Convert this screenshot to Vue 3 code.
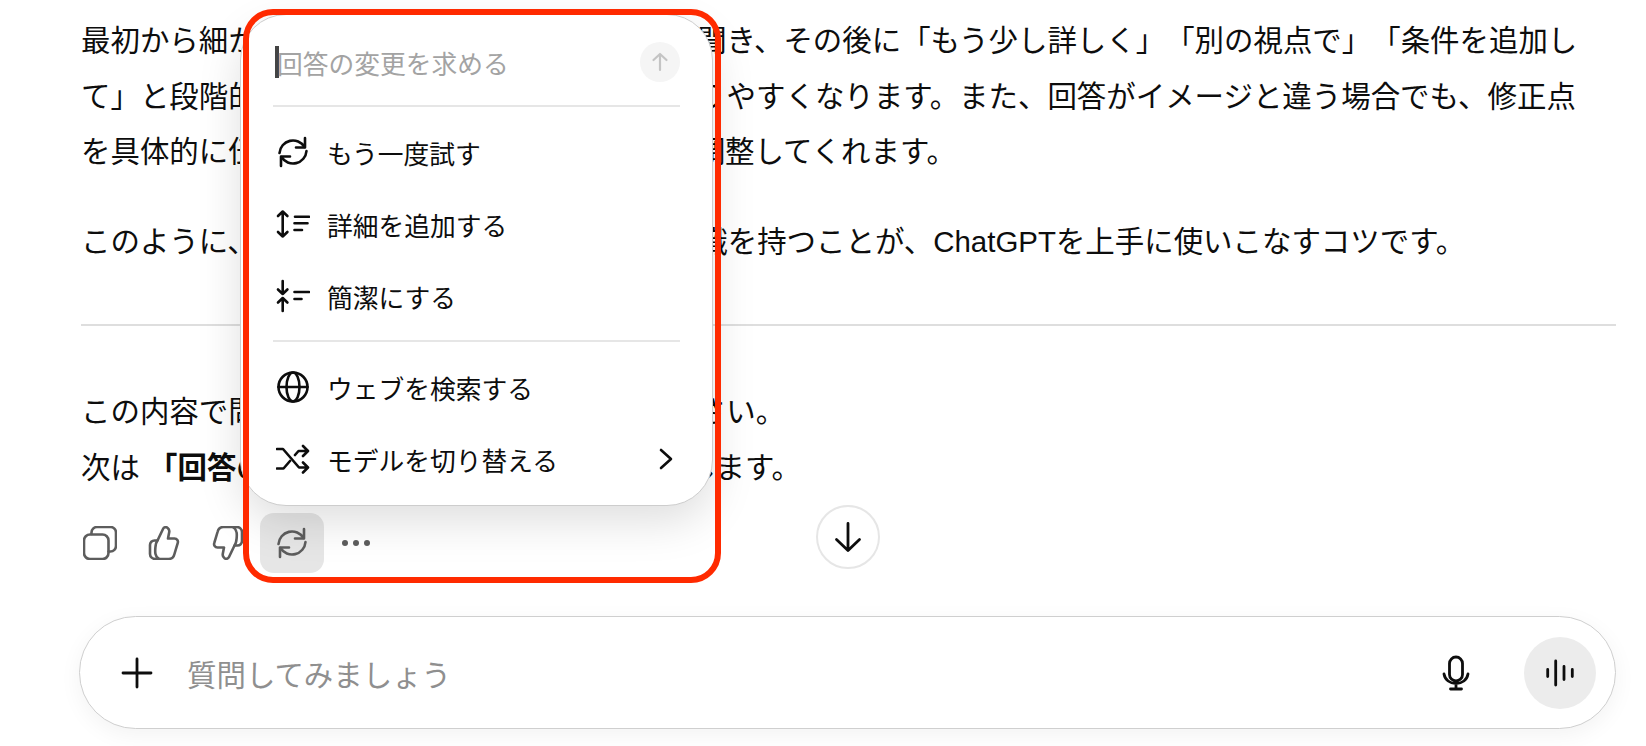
<script setup>
const menuTop = [
  { id: 'retry', label: 'もう一度試す' },
  { id: 'more', label: '詳細を追加する' },
  { id: 'less', label: '簡潔にする' },
]
const menuBottom = [
  { id: 'globe', label: 'ウェブを検索する' },
  { id: 'shuffle', label: 'モデルを切り替える', more: true },
]
</script>

<template>
  <div class="page">
    <main class="thread">
      <p class="para">最初から細かく指定しようとせず、まず全体を聞き、その後に「もう少し詳しく」「別の視点で」「条件を追加し<br>て」と段階的に深掘りすることで、内容が分かりやすくなります。また、回答がイメージと違う場合でも、修正点<br>を具体的に伝えることで、より希望に近い形に調整してくれます。</p>
      <p class="para">このように、最初から完璧を求めず対話する意識を持つことが、ChatGPTを上手に使いこなすコツです。</p>
      <hr class="rule" />
      <p class="para closing">この内容で問題なければ「次へ」と送ってください。<br>次は <strong>「回答の精度を上げるコツ」</strong> を順に解説します。</p>

      <div class="actions">
        <button class="act">
          <svg viewBox="-17 -17 34 34" class="act-icon"><path d="M-8.5-9V-10.500a5.500 5.500 0 0 1 5.500-5.500H10.500a5.500 5.500 0 0 1 5.500 5.500V3a5.500 5.500 0 0 1-5.500 5.500H8.500" /><rect x="-16" y="-8.500" width="24.500" height="24.500" rx="6" /></svg>
        </button>
        <button class="act">
          <svg viewBox="-17 -17 34 34" class="act-icon"><path d="M-6.500-2.500-1-14c.8-1.700 3-2.300 4.500-1.200 1.500 1 2 2.700 1.700 4.400L4-4.500H10.500c2.500 0 4 2.300 3.200 4.600L10.300 11.500C9.500 14.500 7.500 16 4.500 16H-8.500c-3 0-5.500-2-5.500-5V2c0-2.800 2-4.500 4.500-4.500H-6.500Z" /><path d="M-6.500-2.500C-9 .500-9 9-8.500 11-8 13.500-7 15-5 16" /></svg>
        </button>
        <button class="act">
          <svg viewBox="-17 -17 34 34" class="act-icon flip"><path d="M-6.500-2.500-1-14c.8-1.700 3-2.300 4.500-1.200 1.500 1 2 2.700 1.700 4.400L4-4.500H10.500c2.500 0 4 2.300 3.200 4.600L10.300 11.500C9.500 14.500 7.500 16 4.500 16H-8.500c-3 0-5.500-2-5.500-5V2c0-2.800 2-4.500 4.500-4.500H-6.500Z" /><path d="M-6.500-2.500C-9 .500-9 9-8.500 11-8 13.500-7 15-5 16" /></svg>
        </button>
        <button class="act active">
          <svg viewBox="-17 -17 34 34" class="act-icon"><path d="M-13.500 1A13.500 13.500 0 0 1 11.500-5" /><path d="M12-14V-4.500H3" /><path d="M13.500-1A13.500 13.500 0 0 1-11.500 5" /><path d="M-12 14V4.500H-3" /></svg>
        </button>
        <button class="act">
          <svg viewBox="-17 -17 34 34" class="act-icon dots"><circle cx="-11" r="3" /><circle r="3" /><circle cx="11" r="3" /></svg>
        </button>
      </div>

      <div class="composer">
        <svg viewBox="-16 -16 32 32" class="plus"><path d="M-14 0H14M0-14V14" /></svg>
        <span class="ask">質問してみましょう</span>
        <svg viewBox="-16 -18 32 36" class="mic"><rect x="-6.500" y="-16" width="13" height="24" rx="6.500" /><path d="M-12 1C-11 7-6 10.500 0 10.500S11 7 12 1M0 10.500V16M-5.500 16H5.500" /></svg>
        <button class="voice">
          <svg viewBox="-16 -16 32 32" class="bars"><path d="M-12.300-3.500V3.500M-4.300-12V12M4-6.500V6.500M12.300-3.500V3.500" /></svg>
        </button>
      </div>
    </main>

    <button class="to-bottom">
      <svg viewBox="-16 -16 32 32"><path d="M0-13.500V13.500M-11.500 2.500 0 13.500 11.500 2.500" /></svg>
    </button>

    <div class="menu">
      <div class="input-row">
        <span class="caret"></span>
        <span class="hint">回答の変更を求める</span>
        <span class="send">
          <svg viewBox="-10 -10 20 20"><path d="M0-8V8M-6.500-2 0-8 6.500-2" /></svg>
        </span>
      </div>
      <div class="sep"></div>
      <div v-for="item in menuTop" :key="item.id" class="item">
        <svg viewBox="-17 -17 34 34" class="item-icon">
          <template v-if="item.id === 'retry'">
            <path d="M-13.500 1A13.500 13.500 0 0 1 11.500-5" /><path d="M12-14V-4.500H3" /><path d="M13.500-1A13.500 13.500 0 0 1-11.500 5" /><path d="M-12 14V4.500H-3" />
          </template>
          <template v-else-if="item.id === 'more'">
            <path d="M-10.300-12.500V12.500M-15-8-10.300-12.500-5.600-8M-15 8-10.300 12.500-5.600 8" /><path d="M2-7.300H16M1.500-.7H14.500M1.500 6H9" />
          </template>
          <template v-else>
            <path d="M-10.300-15V-2M-15-6.500-10.300-2-5.600-6.500M-10.300 15V2M-15 6.500-10.300 2-5.600 6.500" /><path d="M1.500-4H16M1.500 3H8.500" />
          </template>
        </svg>
        <span>{{ item.label }}</span>
      </div>
      <div class="sep second"></div>
      <div v-for="item in menuBottom" :key="item.id" class="item">
        <svg viewBox="-17 -17 34 34" class="item-icon">
          <template v-if="item.id === 'globe'">
            <circle r="14.500" /><ellipse rx="6.500" ry="14.500" /><path d="M-14.500 0H14.500" />
          </template>
          <template v-else>
            <path d="M-16-10H-10L6 8.500H14.500M10 3.500 15 8.500 10 13.500" /><path d="M-16 9.500H-9.500L-3 2M2-4 5.500-8H14.500M10-13 15-8 10-3" />
          </template>
        </svg>
        <span class="item-label">{{ item.label }}</span>
        <svg v-if="item.more" viewBox="-8 -11 16 22" class="chev"><path d="M-5-9 5 0-5 9" /></svg>
      </div>
    </div>

    <div class="callout"></div>
  </div>
</template>

<style>
html, body { margin: 0; background: #fff; overflow: hidden; }
</style>

<style scoped>
.page {
  position: relative;
  height: 746px;
  overflow: hidden;
  background: #fff;
  color: #0d0d0d;
  font-family: "Liberation Sans", "Noto Sans CJK JP", sans-serif;
  text-spacing-trim: space-all;
}
.thread {
  padding: 13px 30px 0 81px;
}
.para {
  margin: 0 0 34px;
  font-size: 29.44px;
  line-height: 55.5px;
  white-space: nowrap;
}
.para strong { font-weight: 600; }
.rule {
  margin: 55px 0 58px;
  border: 0;
  height: 2px;
  background: #dedede;
}
.closing { margin-bottom: 18px; }
.actions {
  display: flex;
  margin-left: -13px;
}
.act {
  width: 64px;
  height: 60px;
  border: 0;
  padding: 0;
  border-radius: 14px;
  background: transparent;
  display: flex;
  align-items: center;
  justify-content: center;
}
.act.active { background: #e6e6e6; }
.act-icon {
  width: 34px;
  height: 34px;
  fill: none;
  stroke: #5d5d5d;
  stroke-width: 2.600;
  stroke-linecap: round;
  stroke-linejoin: round;
}
.act-icon.flip { transform: rotate(180deg); }
.act-icon.dots { fill: #5d5d5d; stroke: none; }
.composer {
  margin: 43px 0 0 -2px;
  height: 113px;
  box-sizing: border-box;
  border: 1.500px solid #cfcfcf;
  border-radius: 57px;
  background: #fff;
  box-shadow: 0 6px 22px rgba(0, 0, 0, 0.05);
  display: flex;
  align-items: center;
  padding: 0 19px 0 41px;
}
.plus {
  width: 32px;
  height: 32px;
  fill: none;
  stroke: #0d0d0d;
  stroke-width: 2.800;
  stroke-linecap: round;
}
.ask {
  margin-left: 34px;
  flex: 1;
  font-size: 29.44px;
  color: #8f8f8f;
}
.mic {
  width: 32px;
  height: 36px;
  margin-right: 52px;
  fill: none;
  stroke: #0d0d0d;
  stroke-width: 2.800;
  stroke-linecap: round;
}
.voice {
  width: 72px;
  height: 72px;
  padding: 0;
  border: 0;
  border-radius: 50%;
  background: #ececec;
  display: flex;
  align-items: center;
  justify-content: center;
}
.bars {
  width: 32px;
  height: 32px;
  fill: none;
  stroke: #0d0d0d;
  stroke-width: 2.800;
  stroke-linecap: round;
}
.to-bottom {
  position: absolute;
  left: 816px;
  top: 505px;
  width: 64px;
  height: 64px;
  padding: 0;
  box-sizing: border-box;
  border: 2px solid #e6e6e6;
  border-radius: 50%;
  background: #fff;
  display: flex;
  align-items: center;
  justify-content: center;
}
.to-bottom svg {
  width: 32px;
  height: 32px;
  fill: none;
  stroke: #0d0d0d;
  stroke-width: 2.800;
  stroke-linecap: round;
  stroke-linejoin: round;
}
.menu {
  position: absolute;
  left: 240px;
  top: 14px;
  width: 473px;
  height: 492px;
  box-sizing: border-box;
  padding: 25px 32px 12px;
  background: #fff;
  border: 1.500px solid #cdcdcd;
  border-radius: 46px;
  box-shadow: 0 16px 44px rgba(0, 0, 0, 0.13);
  font-size: 25.76px;
}
.input-row {
  height: 44px;
  display: flex;
  align-items: center;
  position: relative;
}
.caret {
  width: 4px;
  height: 32px;
  background: #444;
  margin-right: -2px;
  margin-left: 2px;
}
.hint {
  flex: 1;
  color: #a3a3a3;
}
.send {
  width: 40px;
  height: 40px;
  border-radius: 50%;
  background: #f5f5f5;
  display: flex;
  align-items: center;
  justify-content: center;
}
.send svg {
  width: 20px;
  height: 20px;
  fill: none;
  stroke: #c4c4c4;
  stroke-width: 2.200;
  stroke-linecap: round;
  stroke-linejoin: round;
}
.sep {
  height: 2px;
  background: #e6e6e6;
  margin: 21px 0 9px;
}
.sep.second { margin: 8px 0 9px; }
.item {
  height: 72px;
  display: flex;
  align-items: center;
  gap: 17px;
}
.item-icon {
  width: 34px;
  height: 34px;
  margin-left: 3px;
  flex: none;
  fill: none;
  stroke: #0d0d0d;
  stroke-width: 2.600;
  stroke-linecap: round;
  stroke-linejoin: round;
}
.item-label { flex: 1; }
.chev {
  width: 16px;
  height: 22px;
  margin-right: 6px;
  fill: none;
  stroke: #0d0d0d;
  stroke-width: 2.600;
  stroke-linecap: round;
  stroke-linejoin: round;
}
.callout {
  position: absolute;
  left: 243px;
  top: 9px;
  width: 478px;
  height: 574px;
  box-sizing: border-box;
  border: 6px solid #ff2a00;
  border-radius: 30px;
  pointer-events: none;
}
</style>
